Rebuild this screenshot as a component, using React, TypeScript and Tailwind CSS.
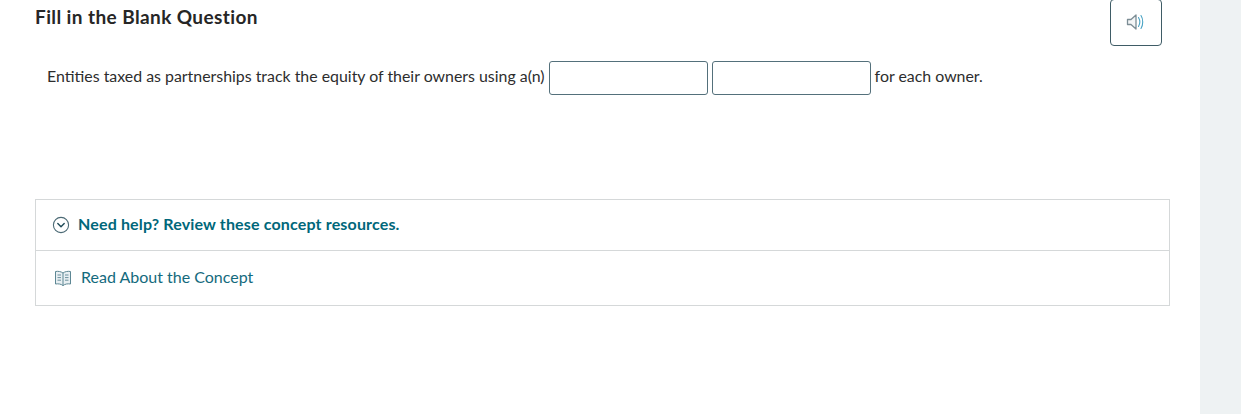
import React from 'react'

const font = { fontFamily: 'Lato, "Open Sans", sans-serif' }

const SpeakerIcon = () => (
  <svg width="20" height="18" viewBox="0 0 20 18" fill="none" strokeLinejoin="round" strokeLinecap="round">
    <path d="M1.5 6.5H5L10 2V16L5 11.5H1.5Z" fill="#f4f6f7" stroke="#7c8d95" strokeWidth="1.3" />
    <path d="M12.5 4.5C14 7 14 11 12.5 13.5" stroke="#4aa3c4" strokeWidth="1.1" />
    <path d="M15 2.5C17.3 6 17.3 12 15 15.5" stroke="#4aa3c4" strokeWidth="1.1" />
  </svg>
)

const ChevronCircle = () => (
  <svg width="18" height="18" viewBox="0 0 18 18" fill="none">
    <circle cx="9" cy="9" r="7.6" stroke="#4c6a75" strokeWidth="1.1" />
    <path d="M5.8 7.6L9 10.8L12.2 7.6" stroke="#1f4a57" strokeWidth="1.4" strokeLinecap="round" strokeLinejoin="round" />
  </svg>
)

const BookIcon = () => (
  <svg width="18" height="17" viewBox="0 0 18 17" fill="none" stroke="#5d8794" strokeWidth="1" strokeLinejoin="round">
    <path d="M9 3C7.2 1.6 4.2 1 1.5 1.5V14C4.2 13.5 7.2 14 9 15.6C10.8 14 13.8 13.5 16.5 14V1.5C13.8 1 10.8 1.6 9 3Z" fill="#e8eff2" />
    <path d="M9 3V15.6" />
    <path d="M3.5 5H7M3.5 7.6H7M3.5 10.2H7M11 5H14.5M11 7.6H14.5M11 10.2H14.5" strokeWidth="0.9" />
  </svg>
)

export default function App() {
  return (
    <div className="flex h-[414px] w-[1241px] overflow-hidden bg-white text-[#2d2d2d]" style={font}>
      <main className="w-[1200px] pl-[35px] pr-[30px]">
        <header className="flex h-[46px] items-start justify-between pr-[8px]">
          <h2 className="mt-[5px] text-[19px] leading-6 font-bold tracking-[0.4px] text-[#262626]">
            Fill in the Blank Question
          </h2>
          <button className="-mt-px flex h-[47px] w-[52px] items-center justify-center rounded-[4px] border border-[#3f5c66] bg-white pb-[2px]">
            <SpeakerIcon />
          </button>
        </header>

        <div className="mt-[15px] flex h-[34px] items-center gap-[4px] pl-[12px] text-[15.9px] whitespace-nowrap">
          <span className="-mt-[5px]">Entities taxed as partnerships track the equity of their owners using a(n)</span>
          <input className="h-[34px] w-[159px] rounded-[3px] border border-[#54707b] bg-white" aria-label="blank 1" />
          <input className="h-[34px] w-[159px] rounded-[3px] border border-[#54707b] bg-white" aria-label="blank 2" />
          <span className="-mt-[5px]">for each owner.</span>
        </div>

        <section className="mt-[104px] border border-[#d5d8d9]">
          <div className="flex h-[51px] items-center gap-[8px] border-b border-[#d5d8d9] pl-[16px]">
            <ChevronCircle />
            <span className="-mt-[3px] text-[16px] font-bold tracking-[0.16px] text-[#00677a]">
              Need help? Review these concept resources.
            </span>
          </div>
          <div className="flex h-[54px] items-center gap-[9px] pl-[18px]">
            <BookIcon />
            <a className="-mt-[2px] text-[16px] text-[#146a7d]">Read About the Concept</a>
          </div>
        </section>
      </main>
      <aside className="flex-1 bg-[#eef2f3]" />
    </div>
  )
}
